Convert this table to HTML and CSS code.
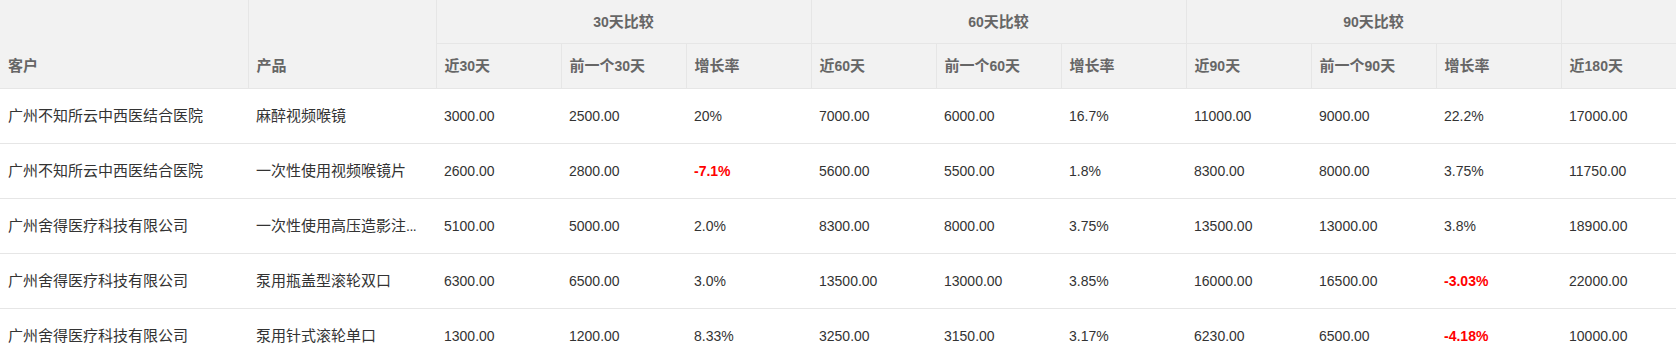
FILE: index.html
```html
<!DOCTYPE html>
<html lang="zh-CN">
<head>
<meta charset="utf-8">
<title>比较表</title>
<link rel="stylesheet" href="styles.css">
</head>
<body>
<div class="wrap">
<table class="grid">
  <colgroup>
    <col class="c-cust"><col class="c-prod">
    <col class="c-num"><col class="c-num"><col class="c-num">
    <col class="c-num"><col class="c-num"><col class="c-num">
    <col class="c-num"><col class="c-num"><col class="c-num">
    <col class="c-num">
  </colgroup>
  <thead>
    <tr class="h1">
      <th rowspan="2" class="first tall"><span class="cj">客户</span></th>
      <th rowspan="2" class="tall"><span class="cj">产品</span></th>
      <th colspan="3" class="grp"><span class="n">30</span><span class="cj">天比较</span></th>
      <th colspan="3" class="grp"><span class="n">60</span><span class="cj">天比较</span></th>
      <th colspan="3" class="grp"><span class="n">90</span><span class="cj">天比较</span></th>
      <th></th>
    </tr>
    <tr class="h2">
      <th><span class="cj">近</span><span class="n">30</span><span class="cj">天</span></th>
      <th><span class="cj">前一个</span><span class="n">30</span><span class="cj">天</span></th>
      <th><span class="cj">增长率</span></th>
      <th><span class="cj">近</span><span class="n">60</span><span class="cj">天</span></th>
      <th><span class="cj">前一个</span><span class="n">60</span><span class="cj">天</span></th>
      <th><span class="cj">增长率</span></th>
      <th><span class="cj">近</span><span class="n">90</span><span class="cj">天</span></th>
      <th><span class="cj">前一个</span><span class="n">90</span><span class="cj">天</span></th>
      <th><span class="cj">增长率</span></th>
      <th><span class="cj">近</span><span class="n">180</span><span class="cj">天</span></th>
    </tr>
  </thead>
  <tbody>
    <tr>
      <td class="cj">广州不知所云中西医结合医院</td><td class="cj">麻醉视频喉镜</td>
      <td>3000.00</td><td>2500.00</td><td>20%</td>
      <td>7000.00</td><td>6000.00</td><td>16.7%</td>
      <td>11000.00</td><td>9000.00</td><td>22.2%</td>
      <td>17000.00</td>
    </tr>
    <tr>
      <td class="cj">广州不知所云中西医结合医院</td><td class="cj">一次性使用视频喉镜片</td>
      <td>2600.00</td><td>2800.00</td><td class="neg">-7.1%</td>
      <td>5600.00</td><td>5500.00</td><td>1.8%</td>
      <td>8300.00</td><td>8000.00</td><td>3.75%</td>
      <td>11750.00</td>
    </tr>
    <tr>
      <td class="cj">广州舍得医疗科技有限公司</td><td><span class="cj">一次性使用高压造影注</span><span class="dots">...</span></td>
      <td>5100.00</td><td>5000.00</td><td>2.0%</td>
      <td>8300.00</td><td>8000.00</td><td>3.75%</td>
      <td>13500.00</td><td>13000.00</td><td>3.8%</td>
      <td>18900.00</td>
    </tr>
    <tr>
      <td class="cj">广州舍得医疗科技有限公司</td><td class="cj">泵用瓶盖型滚轮双口</td>
      <td>6300.00</td><td>6500.00</td><td>3.0%</td>
      <td>13500.00</td><td>13000.00</td><td>3.85%</td>
      <td>16000.00</td><td>16500.00</td><td class="neg">-3.03%</td>
      <td>22000.00</td>
    </tr>
    <tr>
      <td class="cj">广州舍得医疗科技有限公司</td><td class="cj">泵用针式滚轮单口</td>
      <td>1300.00</td><td>1200.00</td><td>8.33%</td>
      <td>3250.00</td><td>3150.00</td><td>3.17%</td>
      <td>6230.00</td><td>6500.00</td><td class="neg">-4.18%</td>
      <td>10000.00</td>
    </tr>
  </tbody>
</table>
</div>
</body>
</html>
```

FILE: styles.css
```css
html, body {
  margin: 0;
  padding: 0;
  background: #fff;
}
.wrap {
  width: 1676px;
  overflow: hidden;
}
.grid {
  width: 1686px;
  table-layout: fixed;
  border-collapse: collapse;
  font-family: "Liberation Sans", "Noto Sans CJK SC", sans-serif;
  font-size: 14px;
  color: #333;
}
.c-cust { width: 248px; }
.c-prod { width: 188px; }
.c-num { width: 125px; }

.grid th {
  background: #f2f2f2;
  color: #666;
  font-weight: bold;
  text-align: left;
  padding: 0 8px;
  border: 1px solid #e6e6e6;
  border-top: none;
  white-space: nowrap;
  line-height: 20px;
}
.grid th.first { border-left: none; }
.grid .h1 th { height: 43px; }
.grid .h2 th { height: 44px; }
.grid th.grp { text-align: center; }
.grid th.tall {
  vertical-align: bottom;
  padding-bottom: 12px;
}
.grid .cj { font-size: 15px; }
.grid .n { font-size: 14px; }
.grid .dots { font-size: 14px; letter-spacing: -0.5px; }

.grid td {
  height: 54px;
  padding: 0 8px;
  border-bottom: 1px solid #e6e6e6;
  white-space: nowrap;
  line-height: 20px;
}
.grid td.neg {
  color: #ff0000;
  font-weight: bold;
}
```
